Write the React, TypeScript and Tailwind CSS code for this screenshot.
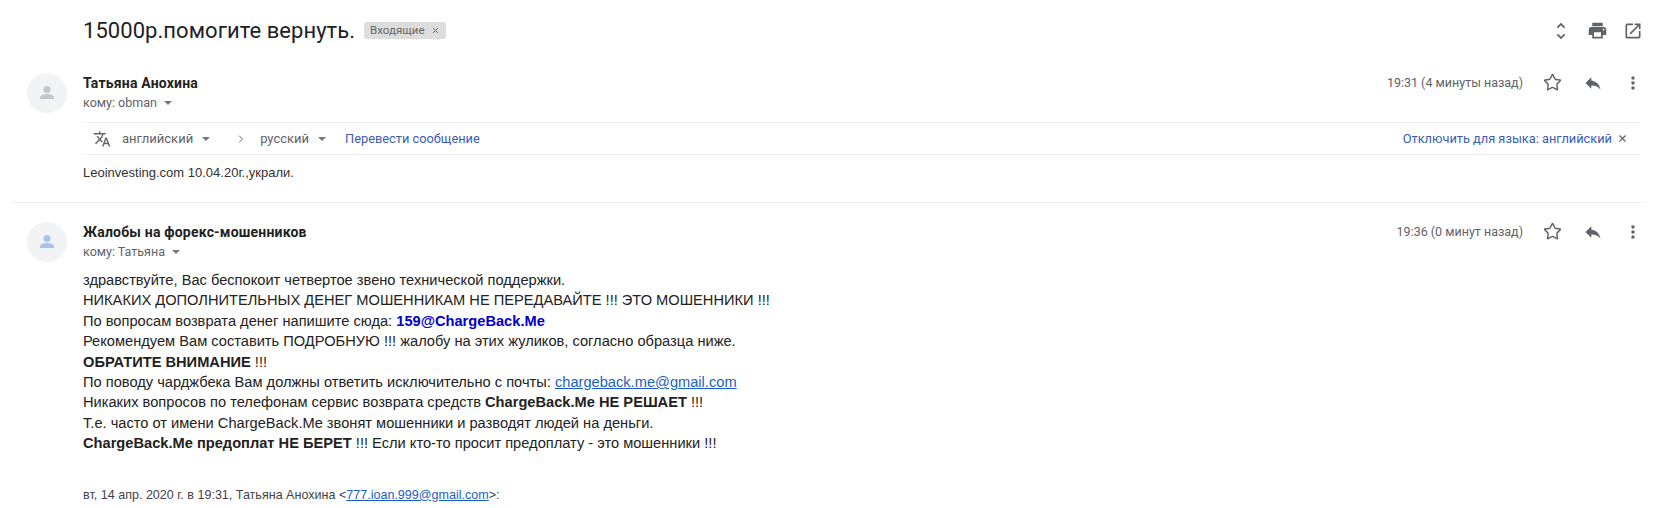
import React from 'react';
import { ChevronRight, Star, X } from 'lucide-react';
import { MdMoreVert, MdOpenInNew, MdPrint, MdReply, MdTranslate, MdUnfoldMore } from 'react-icons/md';

const Caret = () => (
  <svg viewBox="0 0 8 4" className="w-[8px] h-[4px] fill-[#777]">
    <path d="M0 0h8L4 4z" />
  </svg>
);

const Avatar = ({ color }: { color: string }) => (
  <div className="w-[40px] h-[40px] rounded-full bg-[#f1f3f4] flex items-center justify-center shrink-0">
    <svg viewBox="0 0 24 24" className="w-[24px] h-[24px]" style={{ fill: color }}>
      <circle cx="12" cy="8.5" r="3.5" />
      <path d="M5 18v-1.6c0-2.2 4.6-3.4 7-3.4s7 1.200 7 3.400V18z" />
    </svg>
  </div>
);

const MessageHeader = ({ name, to, time, color }: { name: string; to: string; time: string; color: string }) => (
  <div className="flex pl-[27px] pr-[14px]">
    <Avatar color={color} />
    <div className="ml-[16px] flex-1 font-['Roboto',sans-serif]">
      <div className="text-[14px] leading-[20px] font-bold tracking-[0.2px] text-[#222]">{name}</div>
      <div className="flex items-center gap-[7px] text-[12.5px] leading-[20px] text-[#5f6368]">
        <span>кому: {to}</span>
        <Caret />
      </div>
    </div>
    <div className="flex items-start text-[#5f6368]">
      <span className="text-[12.5px] leading-[20px] font-['Roboto',sans-serif]">{time}</span>
      <Star className="ml-[20px] w-[19px] h-[19px]" strokeWidth={1.8} />
      <MdReply className="ml-[21px] w-[20px] h-[20px]" />
      <MdMoreVert className="ml-[20px] w-[20px] h-[20px]" />
    </div>
  </div>
);

export default function App() {
  return (
    <div className="w-[1657px] h-[508px] overflow-hidden bg-white font-['Liberation_Sans',sans-serif] text-[#222]">
      <div className="flex items-center pl-[83px] pr-[14px] h-[61px]">
        <h1 className="text-[22px] leading-[28px] tracking-[0.05px] font-['Roboto',sans-serif] text-[#202124]">15000р.помогите вернуть.</h1>
        <span className="ml-[9px] flex items-center gap-[6px] h-[17px] px-[6px] rounded-[3px] bg-[#dddddd] text-[#666] text-[11.5px] font-['Roboto',sans-serif]">
          Входящие
          <X className="w-[9px] h-[9px]" strokeWidth={2.5} />
        </span>
        <div className="ml-auto flex items-center gap-[15px] text-[#5f6368]">
          <MdUnfoldMore className="w-[22px] h-[24px]" />
          <MdPrint className="w-[21px] h-[21px]" />
          <MdOpenInNew className="w-[20px] h-[20px]" />
        </div>
      </div>

      <div className="pt-[12px]">
        <MessageHeader name="Татьяна Анохина" to="obman" time="19:31 (4 минуты назад)" color="#c4c7c9" />
      </div>

      <div className="ml-[83px] mr-[17px] mt-[9px] h-[33px] border-y border-[#eeeeee] flex items-center font-['Roboto',sans-serif] text-[12.8px]">
        <MdTranslate className="ml-[10px] w-[18px] h-[18px] text-[#666]" />
        <span className="ml-[11px] text-[#5f6368] text-[13px]">английский</span>
        <span className="ml-[9px]"><Caret /></span>
        <ChevronRight className="ml-[25px] w-[12px] h-[12px] text-[#666]" />
        <span className="ml-[13px] text-[#5f6368] text-[13px]">русский</span>
        <span className="ml-[9px]"><Caret /></span>
        <a className="ml-[19px] text-[#3b5cb8]">Перевести сообщение</a>
        <a className="ml-auto text-[#3b5cb8]">Отключить для языка: английский</a>
        <X className="ml-[5px] mr-[12px] w-[11px] h-[11px] text-[#666]" strokeWidth={2.5} />
      </div>

      <p className="ml-[83px] mt-[8px] text-[13px] leading-[20px] text-[#333]">Leoinvesting.com 10.04.20г.,украли.</p>

      <div className="mx-[12px] mt-[19px] border-t border-[#eeeeee]" />

      <div className="pt-[19px]">
        <MessageHeader name="Жалобы на форекс-мошенников" to="Татьяна" time="19:36 (0 минут назад)" color="#a6c3ec" />
      </div>

      <div className="ml-[83px] mt-[8px] text-[14.65px] leading-[20.4px] text-[#222]">
        <div>здравствуйте, Вас беспокоит четвертое звено технической поддержки.</div>
        <div>НИКАКИХ ДОПОЛНИТЕЛЬНЫХ ДЕНЕГ МОШЕННИКАМ НЕ ПЕРЕДАВАЙТЕ !!! ЭТО МОШЕННИКИ !!!</div>
        <div>По вопросам возврата денег напишите сюда: <b className="text-[#0000cc]">159@ChargeBack.Me</b></div>
        <div>Рекомендуем Вам составить ПОДРОБНУЮ !!! жалобу на этих жуликов, согласно образца ниже.</div>
        <div><b>ОБРАТИТЕ ВНИМАНИЕ</b> !!!</div>
        <div>По поводу чарджбека Вам должны ответить исключительно с почты: <a className="text-[#1a5fc4] underline">chargeback.me@gmail.com</a></div>
        <div>Никаких вопросов по телефонам сервис возврата средств <b>ChargeBack.Me НЕ РЕШАЕТ</b> !!!</div>
        <div>Т.е. часто от имени ChargeBack.Me звонят мошенники и разводят людей на деньги.</div>
        <div><b>ChargeBack.Me предоплат НЕ БЕРЕТ</b> !!! Если кто-то просит предоплату - это мошенники !!!</div>
      </div>

      <p className="ml-[83px] mt-[31px] text-[12.55px] leading-[20px] text-[#444]">
        вт, 14 апр. 2020 г. в 19:31, Татьяна Анохина &lt;<a className="text-[#1a5fc4] underline">777.ioan.999@gmail.com</a>&gt;:
      </p>
    </div>
  );
}
